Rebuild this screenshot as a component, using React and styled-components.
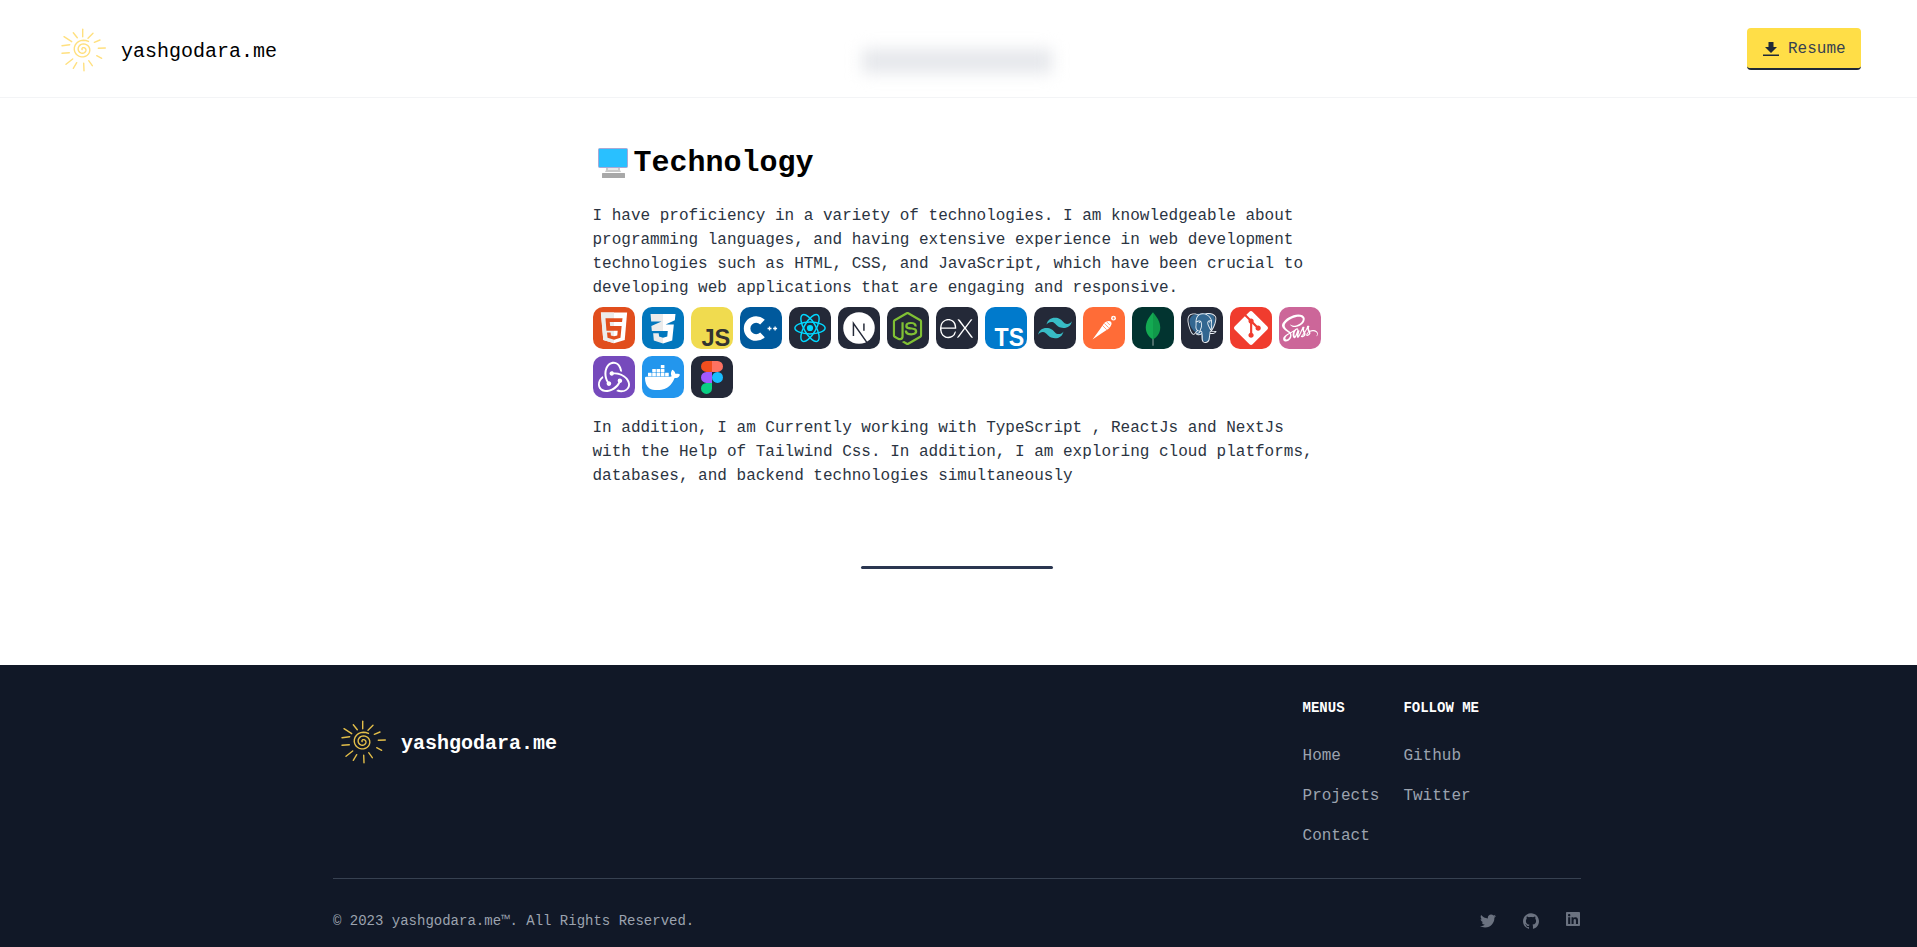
import * as React from 'react'
import styled, { createGlobalStyle } from 'styled-components'
import { FaTwitter, FaLinkedin, FaSass } from 'react-icons/fa'
import {
  SiGithub, SiNodedotjs, SiExpress, SiTailwindcss,
  SiPostgresql, SiGit, SiRedux, SiDocker,
} from 'react-icons/si'

const Global = createGlobalStyle`
  html, body { margin: 0; padding: 0; background: #fff; }
  body { font-family: "Liberation Mono", "DejaVu Sans Mono", monospace; }
  a { color: inherit; text-decoration: none; }
`

const Page = styled.div`
  display: flex;
  flex-direction: column;
  min-height: 100vh;
`

const Header = styled.header`
  display: grid;
  grid-template-columns: 1fr auto 1fr;
  align-items: center;
  height: 98px;
  padding: 0 56px;
  box-sizing: border-box;
  border-bottom: 1px solid #f3f4f6;
`

const Brand = styled.a`
  display: flex;
  align-items: center;
  gap: ${props => props.$gap}px;
  padding-left: ${props => props.$inset}px;
  margin-top: ${props => props.$drop}px;
  font-size: 20px;
  line-height: 28px;
  font-weight: ${props => (props.$bold ? 700 : 400)};
  color: ${props => props.$color};
`

const BrandName = styled.span`
  padding-top: 3px;
`

const SunSvg = styled.svg`
  width: 46px;
  height: 46px;
  flex: none;
  fill: none;
  stroke: ${props => props.$color};
  stroke-width: 1.4;
  stroke-linecap: round;
`

const BlurredNav = styled.div`
  width: 190px;
  height: 24px;
  margin: 25px 3px 0 0;
  background: #e5e7eb;
  filter: blur(8px);
`

const ResumeButton = styled.a`
  justify-self: end;
  display: flex;
  align-items: center;
  gap: 9px;
  box-sizing: border-box;
  width: 114px;
  height: 42px;
  padding: 2px 16px 0;
  border-radius: 4px;
  border-bottom: 2px solid #1f2937;
  background: #ffde47;
  color: #374151;
  font-size: 16px;
  svg { width: 16px; height: 14px; fill: #1f2937; flex: none; }
`

const Content = styled.div`
  padding-right: 3px;
`

const Main = styled.main`
  width: 729px;
  margin: 0 auto;
  padding-top: 47px;
`

const Title = styled.h1`
  display: flex;
  align-items: center;
  gap: 6px;
  margin: 0 0 23px;
  padding-left: 5px;
  font-size: 30px;
  line-height: 36px;
  font-weight: 700;
  color: #000;
  svg { width: 30px; height: 30px; flex: none; }
`

const Prose = styled.p`
  margin: ${props => props.$top || 0}px 0 0;
  font-size: 16px;
  line-height: 24px;
  color: #2b3442;
`

const Skills = styled.div`
  display: flex;
  flex-wrap: wrap;
  gap: 7px;
  margin-top: 7px;
`

const Tile = styled.div`
  display: grid;
  place-items: center;
  width: 42px;
  height: 42px;
  border-radius: 10px;
  background: ${props => props.$bg};
  color: ${props => props.$color || '#fff'};
  & > * { grid-area: 1 / 1; }
  & > svg.full { width: 42px; height: 42px; overflow: visible; }
`

const Divider = styled.div`
  width: 192px;
  height: 3px;
  margin: 78px auto 96px;
  border-radius: 2px;
  background: #2a3650;
`

const Footer = styled.footer`
  flex: 1;
  background: #111827;
  padding: 33px 3px 15px 0;
`

const FooterInner = styled.div`
  width: 1248px;
  margin: 0 auto;
`

const FooterTop = styled.div`
  display: flex;
  justify-content: space-between;
  align-items: flex-start;
  padding-bottom: 30px;
  border-bottom: 1px solid #374151;
`

const FooterBrandWrap = styled.div`
  padding-top: 21px;
`

const Columns = styled.div`
  display: flex;
  gap: 24px;
  margin-right: 102px;
`

const Column = styled.div`
  display: flex;
  flex-direction: column;
  gap: 16px;
`

const ColumnTitle = styled.h2`
  margin: 0 0 10px;
  font-size: 14px;
  line-height: 20px;
  font-weight: 700;
  text-transform: uppercase;
  color: #fff;
`

const ColumnLink = styled.a`
  font-size: 16px;
  line-height: 24px;
  color: #9ca3af;
`

const FooterBottom = styled.div`
  display: flex;
  justify-content: space-between;
  align-items: center;
  margin-top: 32px;
`

const Copyright = styled.span`
  font-size: 14px;
  line-height: 20px;
  color: #9ca3af;
`

const Socials = styled.div`
  display: flex;
  align-items: center;
  gap: 27px;
  color: #6b7280;
  svg { display: block; width: 16px; height: 16px; }
  a:last-child { margin-bottom: 4px; margin-left: -1px; }
`

const rays = [
  [22.7, 2.3, 22.7, 9.7], [13.3, 5.7, 17.3, 10.7], [33, 6.3, 28, 11.3],
  [4, 9.7, 11.7, 14.7], [40, 13, 34.3, 15.3], [2, 18.7, 9.7, 17.7],
  [38.3, 21.3, 45.3, 21], [2, 26.3, 9.3, 25.7], [36.7, 28.7, 41.7, 31.3],
  [6, 37.3, 12.7, 32], [13.3, 41.3, 16.7, 35.7], [23.7, 36.3, 24, 43.7],
  [28.7, 33.7, 32.3, 38.7],
]

// spiral in the middle of the sun, from the centre outwards
const spiral = Array.from({ length: 56 }, (_, i) => {
  const a = i * 0.27 + 3
  const r = 0.8 + i * 0.16
  return `${(23 + Math.cos(a) * r * 1.05).toFixed(2)},${(22.5 + Math.sin(a) * r).toFixed(2)}`
}).join(' ')

const Sun = ({ color }) => (
  <SunSvg viewBox="0 0 46 46" $color={color}>
    {rays.map(([x1, y1, x2, y2]) => (
      <line key={`${x1}-${y1}`} x1={x1} y1={y1} x2={x2} y2={y2} />
    ))}
    <polyline points={spiral} />
  </SunSvg>
)

const Full = ({ children }) => (
  <svg className="full" viewBox="0 0 256 256">{children}</svg>
)

const Html = () => (
  <Tile $bg="#E14E1D">
    <Full>
      <path fill="#fff" d="M48 34l14.6 167.4L128 221.5l65.4-20.1L208 34z" />
      <path fill="#EBEBEB" d="M48 34l14.6 167.4L128 221.5V34z" />
      <path fill="#E14E1D" d="M76 68h104l-3 24H102l2.5 24h70l-7 72-39 11-40-11-3-32h22l1.5 17 19 5 20-5 2.5-28H82z" />
    </Full>
  </Tile>
)

const Css = () => (
  <Tile $bg="#0277BD">
    <Full>
      <defs>
        <linearGradient id="cssThree" x1="0" x2="1" y1="0" y2="0">
          <stop offset=".5" stopColor="#EBEBEB" />
          <stop offset=".5" stopColor="#fff" />
        </linearGradient>
      </defs>
      <path fill="url(#cssThree)" d="M52 42h152l-4 38-56 26h50l-10 98-56 18-56-18-4-44h34l2 20 24 7 26-7 3-34H60l-3-30 62-28H56z" />
    </Full>
  </Tile>
)

const Js = () => (
  <Tile $bg="#F0DB4F">
    <Full>
      <text x="240" y="236" textAnchor="end" fontFamily="Liberation Sans" fontWeight="700" fontSize="150" fill="#323330" textLength="176" lengthAdjust="spacingAndGlyphs">JS</text>
    </Full>
  </Tile>
)

const Cpp = () => (
  <Tile $bg="#00599C">
    <Full>
      <path fill="none" stroke="#fff" strokeWidth="40" d="M137 92a55 55 0 1 0 0 78" />
      <path fill="#fff" d="M168 127h8v-8h8v8h8v8h-8v8h-8v-8h-8zM202 127h8v-8h8v8h8v8h-8v8h-8v-8h-8z" />
    </Full>
  </Tile>
)

const ReactLogo = () => (
  <Tile $bg="#242938">
    <Full>
      <g fill="none" stroke="#00D8FF" strokeWidth="9">
        <ellipse cx="128" cy="128" rx="92" ry="36" />
        <ellipse cx="128" cy="128" rx="92" ry="36" transform="rotate(60 128 128)" />
        <ellipse cx="128" cy="128" rx="92" ry="36" transform="rotate(120 128 128)" />
      </g>
      <circle cx="128" cy="128" r="19" fill="#00D8FF" />
    </Full>
  </Tile>
)

const Next = () => (
  <Tile $bg="#242938">
    <Full>
      <circle cx="128" cy="128" r="96" fill="#fff" />
      <path fill="none" stroke="#242938" strokeWidth="9" d="M94 176V100l86 122M158 100v44" />
    </Full>
  </Tile>
)

const Ts = () => (
  <Tile $bg="#007ACC">
    <Full>
      <text x="238" y="236" textAnchor="end" fontFamily="Liberation Sans" fontWeight="700" fontSize="152" fill="#fff" textLength="180" lengthAdjust="spacingAndGlyphs">TS</text>
    </Full>
  </Tile>
)

const Postman = () => (
  <Tile $bg="#FF6C37">
    <Full>
      <path fill="#fff" d="M58 198l42-58 26-38c12-14 34-22 44-12s0 30-14 42l-40 26z" />
      <g stroke="#FF6C37" strokeWidth="4">
        <path d="M118 112l26 26M130 100l26 26M146 92l18 18" />
      </g>
      <circle cx="186" cy="68" r="15" fill="#fff" />
      <path stroke="#FF6C37" strokeWidth="4" d="M178 68h16M186 60v16" />
    </Full>
  </Tile>
)

const Mongo = () => (
  <Tile $bg="#023430">
    <Full>
      <path stroke="#b8c4c2" strokeWidth="5" d="M128 170v66" />
      <path fill="#13AA52" d="M128 32c-22 28-44 56-44 94 0 34 20 56 44 72z" />
      <path fill="#10994a" d="M128 32c22 28 44 56 44 94 0 34-20 56-44 72z" />
    </Full>
  </Tile>
)

const Postgres = () => (
  <Tile $bg="#242938">
    <Full>
      <path fill="#336791" d="M52 86c0-30 30-48 66-46 14-4 34-6 54-2 26 6 38 26 34 54-2 16-8 30-16 44l-14 6v52c-2 20-30 22-44 12-6-8-6-24-6-38-14 8-30 0-36-14C74 146 52 122 52 86z" />
    </Full>
    <SiPostgresql size={30} color="#e8eef4" />
  </Tile>
)

const Figma = () => (
  <Tile $bg="#242938">
    <Full>
      <path fill="#F24E1E" d="M128 30H94.5a33.5 33.5 0 0 0 0 67H128z" />
      <path fill="#FF7262" d="M128 30h33.5a33.5 33.5 0 0 1 0 67H128z" />
      <path fill="#A259FF" d="M128 97H94.5a33.5 33.5 0 0 0 0 67H128z" />
      <circle cx="161.5" cy="130.5" r="33.5" fill="#1ABCFE" />
      <path fill="#0ACF83" d="M128 164H94.5a33.5 33.5 0 1 0 33.5 33.5z" />
    </Full>
  </Tile>
)

export default function App() {
  return (
    <Page>
      <Global />
      <Header>
        <Brand href="#" $gap={15} $inset={4} $drop={3} $color="#000">
          <Sun color="#ffe07f" />
          <BrandName>yashgodara.me</BrandName>
        </Brand>
        <BlurredNav />
        <ResumeButton href="#">
          <svg viewBox="0 0 16 14">
            <path d="M5.5 0h5v5H14L8 11 2 5h3.5zM0 12.6h16V14H0z" />
          </svg>
          Resume
        </ResumeButton>
      </Header>

      <Content>
        <Main>
          <Title>
            <svg viewBox="0 0 30 30">
              <rect x="0.5" y="0.5" width="29" height="19" rx="1" fill="#29c0ff" stroke="#a9a9d6" />
              <path fill="#c9c9c9" d="M8 20h14v2l1 2H7l1-2z" />
              <path fill="#e8e8e8" d="M10 20h10v2H10z" />
              <rect x="4" y="25" width="23" height="5" rx=".5" fill="#a8a8a8" />
            </svg>
            Technology
          </Title>
          <Prose>
            I have proficiency in a variety of technologies. I am knowledgeable about
            programming languages, and having extensive experience in web development
            technologies such as HTML, CSS, and JavaScript, which have been crucial to
            developing web applications that are engaging and responsive.
          </Prose>
          <Skills>
            <Html />
            <Css />
            <Js />
            <Cpp />
            <ReactLogo />
            <Next />
            <Tile $bg="#242938" $color="#80c034"><SiNodedotjs size={33} /></Tile>
            <Tile $bg="#242938"><SiExpress size={33} /></Tile>
            <Ts />
            <Tile $bg="#242938" $color="#38bcc6"><SiTailwindcss size={34} /></Tile>
            <Postman />
            <Mongo />
            <Postgres />
            <Tile $bg="#F03C2E"><SiGit size={34} /></Tile>
            <Tile $bg="#CC6699"><FaSass size={36} /></Tile>
            <Tile $bg="#764ABC"><SiRedux size={32} /></Tile>
            <Tile $bg="#2396ED"><SiDocker size={35} /></Tile>
            <Figma />
          </Skills>
          <Prose $top={18}>
            In addition, I am Currently working with TypeScript , ReactJs and NextJs
            with the Help of Tailwind Css. In addition, I am exploring cloud platforms,
            databases, and backend technologies simultaneously
          </Prose>
          <Divider />
        </Main>
      </Content>

      <Footer>
        <FooterInner>
          <FooterTop>
            <FooterBrandWrap>
              <Brand href="#" $gap={15} $inset={7} $drop={0} $bold $color="#fff">
                <Sun color="#e3be4a" />
                <BrandName>yashgodara.me</BrandName>
              </Brand>
            </FooterBrandWrap>
            <Columns>
              <Column>
                <ColumnTitle>Menus</ColumnTitle>
                <ColumnLink href="#">Home</ColumnLink>
                <ColumnLink href="#">Projects</ColumnLink>
                <ColumnLink href="#">Contact</ColumnLink>
              </Column>
              <Column>
                <ColumnTitle>Follow me</ColumnTitle>
                <ColumnLink href="#">Github</ColumnLink>
                <ColumnLink href="#">Twitter</ColumnLink>
              </Column>
            </Columns>
          </FooterTop>
          <FooterBottom>
            <Copyright>© 2023 yashgodara.me™. All Rights Reserved.</Copyright>
            <Socials>
              <a href="#"><FaTwitter /></a>
              <a href="#"><SiGithub /></a>
              <a href="#"><FaLinkedin /></a>
            </Socials>
          </FooterBottom>
        </FooterInner>
      </Footer>
    </Page>
  )
}
